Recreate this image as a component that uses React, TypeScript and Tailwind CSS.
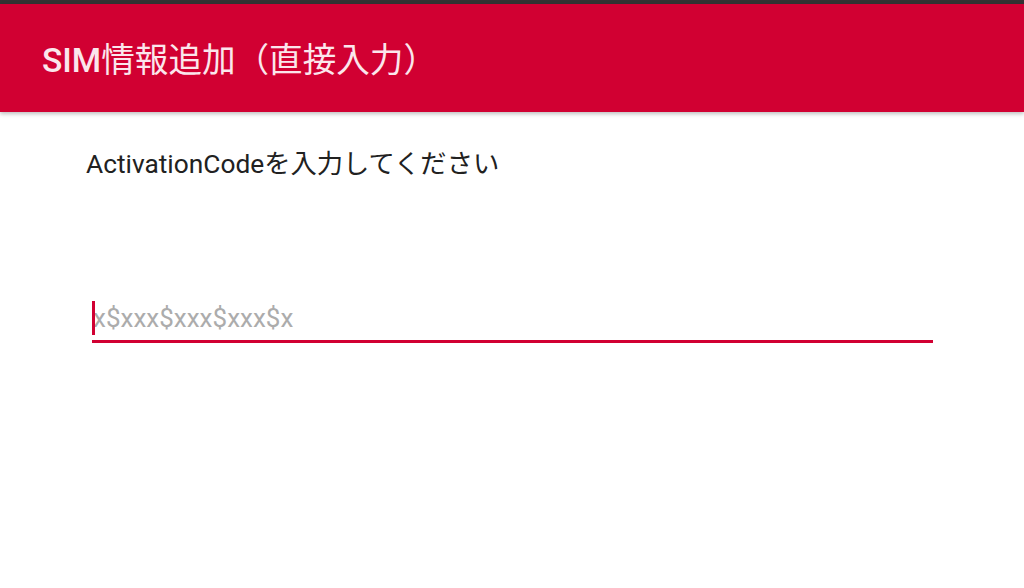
const font = {
  fontFamily: 'Roboto, "Noto Sans CJK JP", sans-serif',
};

export default function App() {
  return (
    <div className="flex h-[588px] w-[1024px] flex-col bg-white" style={font}>
      <div className="h-[4px] bg-[#333333]" />
      <header className="relative z-10 flex h-[108px] items-center bg-[#d10032] pl-[42px] pt-[6px] shadow-[0_2px_4px_rgba(0,0,0,0.25)]">
        <h1 className="text-[33.6px] font-normal leading-none text-[#fbe6ec]">
          <span className="font-medium">SIM</span>情報追加（直接入力）
        </h1>
      </header>
      <main className="flex flex-col pl-[86px] pr-[91px] pt-[32px]">
        <p className="text-[26.3px] leading-[40px] text-[#212121]">
          ActivationCodeを入力してください
        </p>
        <div className="ml-[6px] mt-[116px] flex flex-col">
          <div className="relative flex h-[36px] items-center">
            <input
              className="w-full bg-transparent pl-[1px] text-[26px] leading-[36px] text-[#212121] outline-none placeholder:text-[#acacac]"
              placeholder="x$xxx$xxx$xxx$x"
              style={font}
            />
            <span className="absolute left-0 top-[1px] h-[34px] w-[3px] bg-[#d10032]" />
          </div>
          <div className="mt-[4px] h-[3px] bg-[#d10032]" />
        </div>
      </main>
    </div>
  );
}
